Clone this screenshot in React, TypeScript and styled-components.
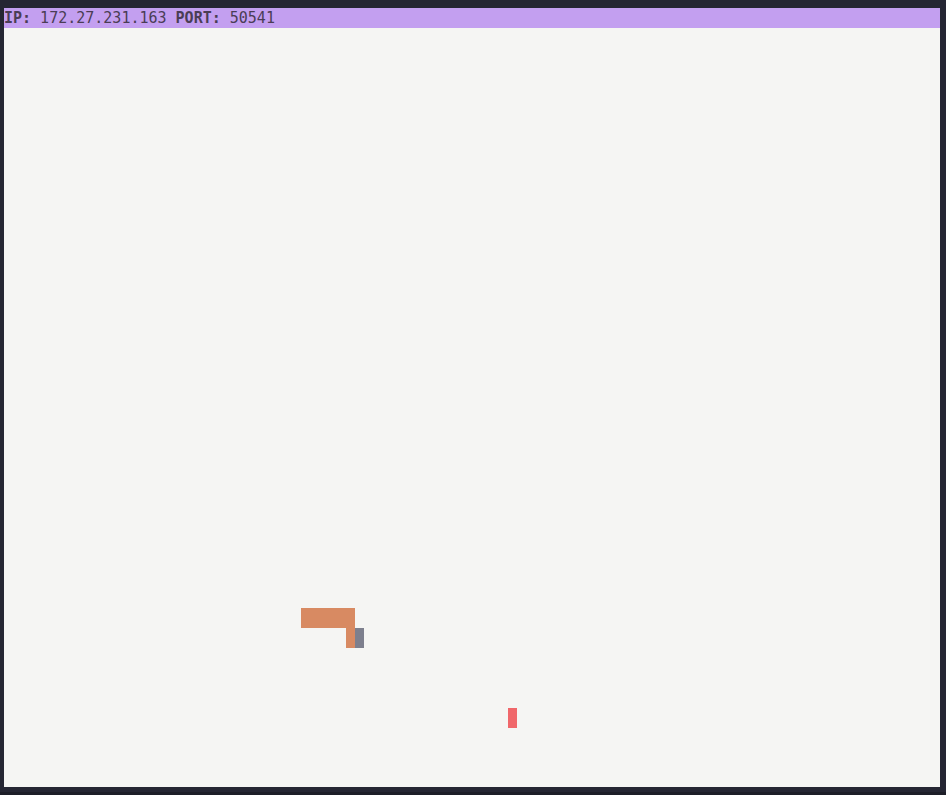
import React from "react";
import styled, { createGlobalStyle } from "styled-components";

const Global = createGlobalStyle`
  html, body { margin: 0; padding: 0; height: 100%; background: #252633; }
  #root { height: 100%; }
`;

const Frame = styled.div`
  box-sizing: border-box;
  width: 946px;
  height: 795px;
  padding: 8px 6px 5px 4px;
  background: #252633;
  border-bottom: 3px solid #1d1e28;
  display: flex;
`;

const Terminal = styled.div`
  flex: 1;
  display: flex;
  flex-direction: column;
  background: #f5f5f3;
  font-family: "DejaVu Sans Mono", "Liberation Mono", monospace;
  font-size: 15px;
  line-height: 20px;
  color: #4a3d55;
`;

const StatusBar = styled.div`
  height: 20px;
  background: #c39ff0;
  white-space: pre;
  display: flex;
  align-items: center;
`;

const Label = styled.span`
  font-weight: bold;
`;

const Board = styled.div`
  flex: 1;
  display: grid;
  grid-template-columns: repeat(104, 9px);
  grid-auto-rows: 20px;
`;

type Kind = "body" | "head" | "food";
const colors: Record<Kind, string> = {
  body: "#d88a62",
  head: "#7d7f8d",
  food: "#f0676a",
};

const Cell = styled.div<{ $col: number; $row: number; $span?: number; $kind: Kind }>`
  grid-column: ${(p) => p.$col + 1} / span ${(p) => p.$span ?? 1};
  grid-row: ${(p) => p.$row + 1};
  background: ${(p) => colors[p.$kind]};
`;

export default function App() {
  return (
    <>
      <Global />
      <Frame>
        <Terminal>
          <StatusBar>
            <Label>IP:</Label> 172.27.231.163 <Label>PORT:</Label> 50541
          </StatusBar>
          <Board>
            <Cell $col={33} $row={29} $span={6} $kind="body" />
            <Cell $col={38} $row={30} $kind="body" />
            <Cell $col={39} $row={30} $kind="head" />
            <Cell $col={56} $row={34} $kind="food" />
          </Board>
        </Terminal>
      </Frame>
    </>
  );
}
